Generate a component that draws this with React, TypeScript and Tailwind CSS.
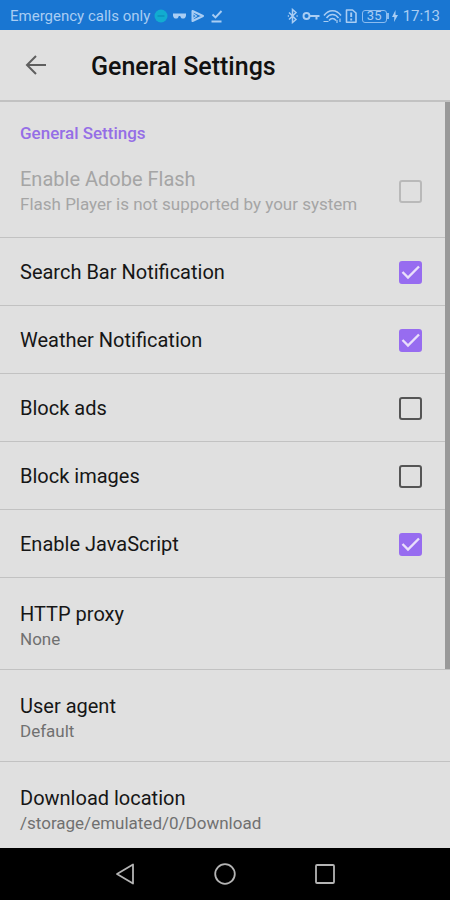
import { useState } from 'react';
import { clsx } from 'clsx';

interface Setting {
  id: string;
  title: string;
  summary?: string;
  type: 'checkbox' | 'link';
  checked?: boolean;
  disabled?: boolean;
}

const settings: Setting[] = [
  {
    id: 'flash',
    title: 'Enable Adobe Flash',
    summary: 'Flash Player is not supported by your system',
    type: 'checkbox',
    disabled: true,
  },
  { id: 'search-bar', title: 'Search Bar Notification', type: 'checkbox', checked: true },
  { id: 'weather', title: 'Weather Notification', type: 'checkbox', checked: true },
  { id: 'block-ads', title: 'Block ads', type: 'checkbox' },
  { id: 'block-images', title: 'Block images', type: 'checkbox' },
  { id: 'javascript', title: 'Enable JavaScript', type: 'checkbox', checked: true },
  { id: 'proxy', title: 'HTTP proxy', summary: 'None', type: 'link' },
  { id: 'user-agent', title: 'User agent', summary: 'Default', type: 'link' },
  { id: 'download', title: 'Download location', summary: '/storage/emulated/0/Download', type: 'link' },
];

function StatusBar() {
  return (
    <div className="flex h-[30px] shrink-0 items-center justify-between bg-[#1976d2] px-[10px] pt-[2px] text-[#a9cdf3]">
      <div className="flex items-center gap-1">
        <span className="text-[15px] leading-5 whitespace-nowrap">Emergency calls only</span>
        {/* Notification icons */}
        <svg className="h-[14px] w-[70px]" viewBox="0 0 70 14" fill="none">
          <circle cx="7" cy="7" r="6.5" fill="#12acd0" />
          <path d="M3.5 7h7" stroke="#0d93bd" strokeWidth="1.6" />
          <path d="M19 4.500h13v2.200c-.4 2-1.500 2.800-3 2.800-1.600 0-2.400-.9-2.800-2.600h-1.400c-.4 1.700-1.200 2.600-2.800 2.600-1.500 0-2.600-.8-3-2.800z" fill="#a9cdf3" />
          <path d="M38.500 2l10.500 5-10.500 5z" stroke="#a9cdf3" strokeWidth="2" strokeLinejoin="round" />
          <path d="M39 4.500l3.500 2.500-3.500 2.500" stroke="#a9cdf3" strokeWidth="1.200" />
          <path d="M58.500 5.500l3 3L67.500 2M57.500 12.500h10" stroke="#a9cdf3" strokeWidth="1.900" />
        </svg>
      </div>
      <div className="flex items-center gap-[5px]">
        <svg className="h-4 w-[70px]" viewBox="0 0 70 16" fill="none" stroke="currentColor" strokeWidth="1.5">
          {/* Bluetooth */}
          <path d="M2 4.500l7 7-3.500 3v-13l3.500 3-7 7" />
          <path d="M.8 8h1.200M9.500 8h1.200" />
          {/* VPN key */}
          <circle cx="19.500" cy="8" r="3" strokeWidth="1.900" />
          <path d="M22.500 8h10M29.500 8v3.500" strokeWidth="2" />
          {/* Wi-Fi */}
          <path d="M37 7.500c4.500-6.500 12.500-6.500 17 0M39.500 10c3.300-4.800 8.700-4.800 12 0M42 12.500c2-2.600 5-2.600 7 0" />
          <path d="M36.500 13.500h5M50 12v3M53 10.500v3.500" strokeWidth="1.200" />
          {/* SIM alert */}
          <path d="M59.500 2h6l3.500 3v9.200h-9.500z" strokeWidth="1.600" strokeLinejoin="round" />
          <path d="M64.200 4.500v4.500M64.200 10.500v2" strokeWidth="1.900" />
        </svg>
        <div className="flex items-center">
          <span className="flex h-[13px] w-[25px] items-center justify-center rounded-[3px] border border-[#8bbcf0] text-[13px] leading-3">35</span>
          <span className="h-[6px] w-[2px] bg-[#8bbcf0]" />
          <svg className="ml-[3px] h-3 w-[6px]" viewBox="0 0 6 12" fill="currentColor">
            <path d="M3.500 0L0 7h2.300L2 12l4-7H3.500z" />
          </svg>
        </div>
        <span className="text-[15px] leading-5">17:13</span>
      </div>
    </div>
  );
}

function Header() {
  return (
    <header className="flex h-[72px] shrink-0 items-center border-b-2 border-[#c2c2c2] px-[21px] pt-[2px]">
      <button type="button" aria-label="Back" className="flex size-[30px] items-center justify-center text-[#5f5f5f]">
        <svg className="size-[30px]" viewBox="0 0 30 30" fill="none" stroke="currentColor" strokeWidth="2">
          <path d="M25 14H6M15 5l-9 9 9 9" />
        </svg>
      </button>
      <h1 className="ml-10 pt-[2px] text-[25px] leading-8 font-medium text-[#111]">General Settings</h1>
    </header>
  );
}

function SettingText({ setting }: { setting: Setting }) {
  return (
    <span className="block min-w-0 flex-1">
      <span className={clsx('block text-[20px] leading-[26px]', setting.disabled ? 'text-[#a5a5a5]' : 'text-[#161616]')}>
        {setting.title}
      </span>
      {setting.summary && (
        <span className={clsx('block text-[17px] leading-6', setting.disabled ? 'text-[#a5a5a5]' : 'text-[#707070]')}>
          {setting.summary}
        </span>
      )}
    </span>
  );
}

function CheckboxRow({ setting }: { setting: Setting }) {
  const [checked, setChecked] = useState(!!setting.checked);

  return (
    <label
      htmlFor={setting.id}
      className={clsx('flex items-center pr-7 pl-5', setting.summary ? 'pt-[21px] pb-[21px]' : 'pt-[21px] pb-5')}
    >
      <SettingText setting={setting} />
      <span className="grid shrink-0 place-items-center">
        <input
          id={setting.id}
          type="checkbox"
          checked={checked}
          disabled={setting.disabled}
          onChange={(e) => setChecked(e.target.checked)}
          className="col-start-1 row-start-1 size-[23px] appearance-none rounded-[3px] border-2 border-[#555] checked:border-[#976cf0] checked:bg-[#976cf0] disabled:border-[#b9b9b9]"
        />
        {checked && (
          <svg className="pointer-events-none col-start-1 row-start-1 size-[23px]" viewBox="0 0 23 23" fill="none" stroke="#e9dffb" strokeWidth="2.4">
            <path d="M3.500 11l5.500 5.500L20 5.500" />
          </svg>
        )}
      </span>
    </label>
  );
}

function LinkRow({ setting }: { setting: Setting }) {
  return (
    <button type="button" className="flex w-full pt-[23px] pr-7 pb-[18px] pl-5 text-left">
      <SettingText setting={setting} />
    </button>
  );
}

function NavigationBar() {
  return (
    <nav className="flex h-[52px] shrink-0 items-center justify-center gap-[70px] bg-black text-[#b4b4b4]">
      <button type="button" aria-label="Back" className="size-[30px]">
        <svg viewBox="0 0 30 30" fill="none" stroke="currentColor" strokeWidth="1.800" strokeLinejoin="round">
          <path d="M23 5.500v19L7 15z" />
        </svg>
      </button>
      <button type="button" aria-label="Home" className="size-[30px]">
        <svg viewBox="0 0 30 30" fill="none" stroke="currentColor" strokeWidth="1.800">
          <circle cx="15" cy="15" r="9.800" />
        </svg>
      </button>
      <button type="button" aria-label="Recent apps" className="size-[30px]">
        <svg viewBox="0 0 30 30" fill="none" stroke="currentColor" strokeWidth="1.800">
          <rect x="6" y="6" width="18" height="18" rx="1" />
        </svg>
      </button>
    </nav>
  );
}

export default function App() {
  return (
    <div className="flex h-screen flex-col bg-[#e0e0e0] font-['Roboto',sans-serif]">
      <StatusBar />
      <Header />
      <main className="relative min-h-0 flex-1 overflow-hidden">
        <h2 className="pt-[19px] pl-5 text-[17px] leading-6 font-medium text-[#956ee6]">General Settings</h2>
        <ul>
          {settings.map((setting) => (
            <li key={setting.id} className="border-b border-[#c2c2c2]">
              {setting.type === 'checkbox' ? <CheckboxRow setting={setting} /> : <LinkRow setting={setting} />}
            </li>
          ))}
        </ul>
        {/* Scroll indicator */}
        <div className="absolute top-0 right-0 h-[76%] w-[5px] bg-[#999]" />
      </main>
      <NavigationBar />
    </div>
  );
}
